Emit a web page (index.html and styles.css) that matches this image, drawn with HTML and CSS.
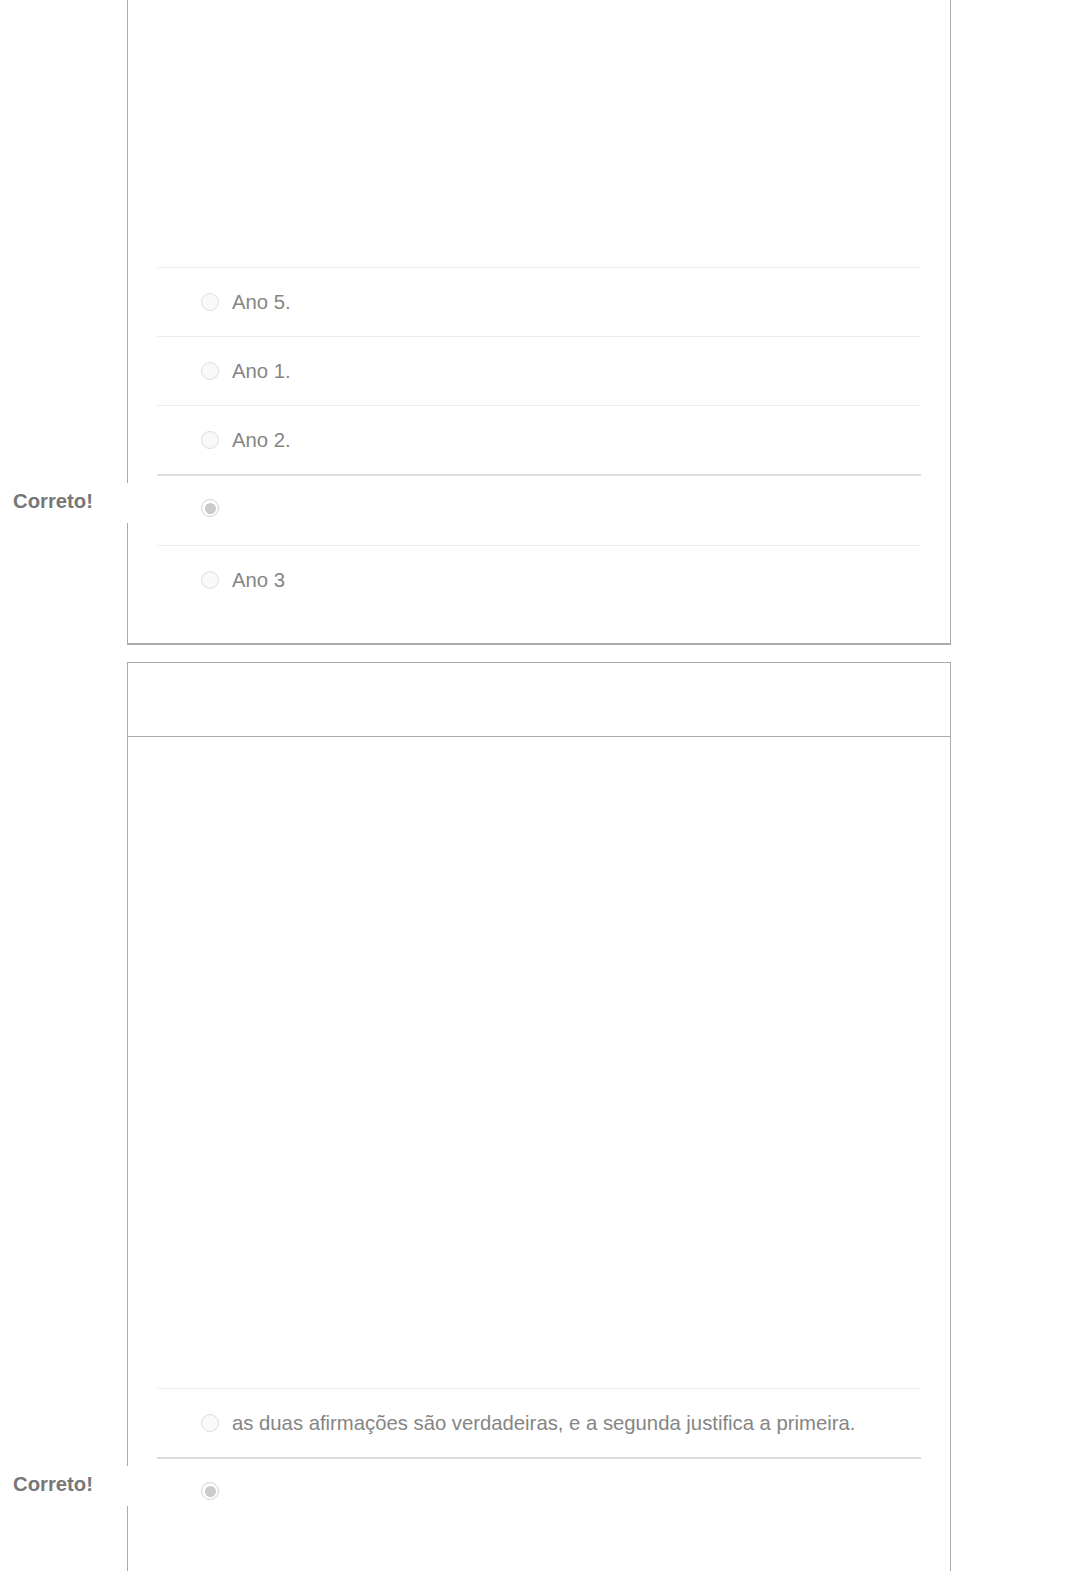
FILE: index.html
```html
<!DOCTYPE html>
<html lang="pt">
<head>
    <meta charset="UTF-8">
    <meta name="viewport" content="width=device-width, initial-scale=1.0">
    <title>Questionário</title>
    <link rel="stylesheet" href="styles.css">
</head>
<body>
    <div class="quiz">
        <div class="question first">
            <div class="question-header"></div>
            <div class="question-text short"></div>
            <div class="answers">
                <div class="answer">
                    <span class="radio"></span>
                    <span class="answer-text">Ano 5.</span>
                </div>
                <div class="answer">
                    <span class="radio"></span>
                    <span class="answer-text">Ano 1.</span>
                </div>
                <div class="answer">
                    <span class="radio"></span>
                    <span class="answer-text">Ano 2.</span>
                </div>
                <div class="answer selected">
                    <span class="answer-arrow">Correto!</span>
                    <span class="radio checked"></span>
                    <span class="answer-text"></span>
                </div>
                <div class="answer">
                    <span class="radio"></span>
                    <span class="answer-text">Ano 3</span>
                </div>
            </div>
        </div>

        <div class="question last">
            <div class="question-header"></div>
            <div class="question-text tall"></div>
            <div class="answers">
                <div class="answer">
                    <span class="radio"></span>
                    <span class="answer-text">as duas afirmações são verdadeiras, e a segunda justifica a primeira.</span>
                </div>
                <div class="answer selected">
                    <span class="answer-arrow">Correto!</span>
                    <span class="radio checked"></span>
                    <span class="answer-text"></span>
                </div>
            </div>
        </div>
    </div>
</body>
</html>
```

FILE: styles.css
```css
body {
    font-family: 'Liberation Sans', Arial, sans-serif;
    font-size: 20.3px;
    color: #858585;
    background-color: #fff;
    margin: 0;
}
.quiz {
    width: 824px;
    margin: 0 auto;
}
.question {
    border: 1px solid #aaa;
    border-bottom-width: 2px;
    margin-bottom: 17px;
}
.question.first {
    margin-top: -100px;
}
.question.last .answers {
    padding-bottom: 120px;
}
.question-header {
    height: 73px;
    border-bottom: 1px solid #aaa;
}
.question-text.short {
    height: 292px;
}
.question-text.tall {
    height: 651px;
}
.answers {
    padding: 0 29px 29px;
}
.answer {
    box-sizing: border-box;
    height: 69px;
    border-top: 1px solid #ededed;
    display: flex;
    align-items: center;
    padding-left: 44px;
}
.answer.selected {
    position: relative;
    height: 71px;
    border-top: 2px solid #dcdcdc;
    align-items: flex-start;
    padding-top: 23px;
}
.radio {
    box-sizing: border-box;
    width: 18px;
    height: 18px;
    border: 1px solid #dedede;
    border-radius: 50%;
    background-color: #f9f9f9;
    flex-shrink: 0;
}
.radio.checked {
    border-color: #d2d2d2;
    background-color: #fff;
    display: flex;
    justify-content: center;
    align-items: center;
}
.radio.checked::after {
    content: "";
    width: 11px;
    height: 11px;
    border-radius: 50%;
    background-color: #cacaca;
}
.answer-text {
    margin-left: 13px;
}
.answer-arrow {
    position: absolute;
    top: 7px;
    left: -157px;
    width: 140px;
    height: 40px;
    line-height: 37px;
    padding-left: 13px;
    box-sizing: border-box;
    background-color: #fff;
    color: #777;
    font-weight: bold;
}
```
